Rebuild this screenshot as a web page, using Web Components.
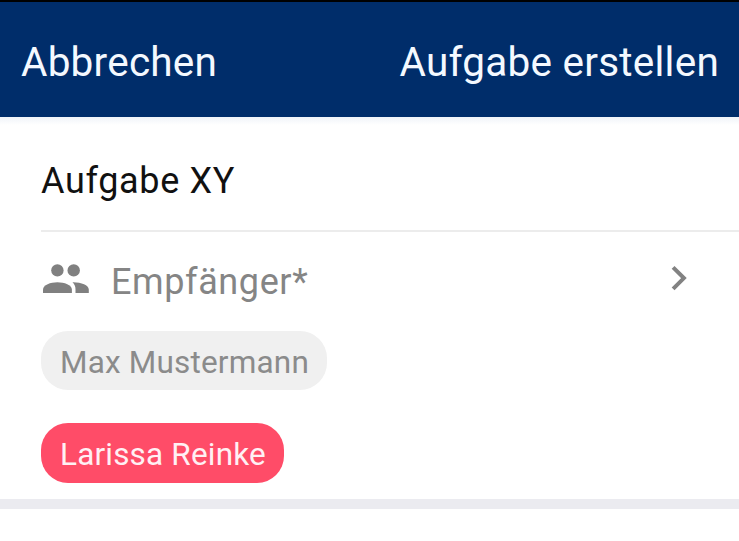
<!DOCTYPE html>
<html lang="de">
<head>
<meta charset="utf-8">
<title>Aufgabe erstellen</title>
<style>
  body {
    margin: 0;
    background: #fff;
    font-family: Roboto, sans-serif;
  }
</style>
</head>
<body>
<task-form>
  <task-toolbar slot="toolbar">
    <span slot="start">Abbrechen</span>
    <span slot="end">Aufgabe erstellen</span>
  </task-toolbar>
  <task-title>Aufgabe XY</task-title>
  <task-recipients label="Empfänger*">
    <user-chip>Max Mustermann</user-chip>
    <user-chip active>Larissa Reinke</user-chip>
  </task-recipients>
</task-form>

<script>
class BaseElement extends HTMLElement {
  constructor() {
    super();
    const template = document.createElement('template');
    template.innerHTML = this.constructor.markup;
    this.attachShadow({ mode: 'open' });
    this.shadowRoot.appendChild(template.content.cloneNode(true));
  }
}

class TaskForm extends BaseElement {
  static markup = `
    <style>
      :host {
        display: flex;
        flex-direction: column;
        height: 541px;
        overflow: hidden;
      }

      .content {
        flex: none;
        box-sizing: border-box;
        height: 392px;
        padding-left: 41px;
        border-bottom: 10px solid #ebebf0;
        background: linear-gradient(#f0f3f9, #fff 8px);
      }
    </style>
    <slot name="toolbar"></slot>
    <div class="content"><slot></slot></div>
  `;
}

class TaskToolbar extends BaseElement {
  static markup = `
    <style>
      :host {
        display: flex;
        align-items: center;
        justify-content: space-between;
        flex: none;
        box-sizing: border-box;
        height: 117px;
        padding: 4px 20px 0 21px;
        border-top: 2px solid #000;
        background: #002d6a;
        color: #f4f9ff;
        font-size: 40.5px;
        letter-spacing: 0.23px;
        line-height: 48px;
        white-space: nowrap;
      }
    </style>
    <slot name="start"></slot>
    <slot name="end"></slot>
  `;
}

class TaskTitle extends BaseElement {
  static markup = `
    <style>
      :host {
        display: flex;
        align-items: center;
        box-sizing: border-box;
        height: 115px;
        padding-top: 15px;
        border-bottom: 2px solid #ececec;
        color: #111;
        font-size: 36px;
        letter-spacing: 0.65px;
      }
    </style>
    <slot></slot>
  `;
}

class TaskRecipients extends BaseElement {
  static observedAttributes = ['label'];

  static markup = `
    <style>
      :host {
        display: block;
      }

      .row {
        display: flex;
        align-items: center;
        height: 99px;
        color: #858585;
      }

      .people {
        width: 50px;
        height: 50px;
        margin-bottom: 6px;
      }

      .label {
        flex: 1;
        margin-left: 20px;
        font-size: 36px;
        letter-spacing: 0.6px;
      }

      .chevron {
        width: 20px;
        height: 30px;
        margin: 0 50px 7px 0;
      }

      .chips {
        display: flex;
        flex-direction: column;
        align-items: flex-start;
        gap: 33px;
      }
    </style>
    <div class="row">
      <svg class="people" viewBox="0 0 50 50" fill="#808080">
        <circle cx="16.4" cy="16.4" r="6.2"/>
        <circle cx="32.7" cy="16.4" r="6.2"/>
        <path d="M2 39v-3.5c0-4.5 7.5-7.3 14.4-7.3s14.5 2.8 14.5 7.3v3.5z"/>
        <path d="M31.5 28.3c8.3-.2 16.3 2.7 16.3 7.2v3.5H34.5v-3.5c0-3-1-5.1-3-7.2z"/>
      </svg>
      <span class="label"></span>
      <svg class="chevron" viewBox="0 0 20 30" fill="none" stroke="#828282" stroke-width="4">
        <path d="M4.1 4.3L14.9 15.1L4.1 25.9"/>
      </svg>
    </div>
    <div class="chips"><slot></slot></div>
  `;

  attributeChangedCallback(name, oldVal, newVal) {
    this.shadowRoot.querySelector('.label').textContent = newVal || '';
  }
}

class UserChip extends BaseElement {
  static markup = `
    <style>
      :host {
        display: flex;
        align-items: center;
        box-sizing: border-box;
        height: 59px;
        padding: 4px 18px 0 19px;
        border-radius: 27px;
        background: #f0f0f0;
        color: #8b8b8b;
        font-size: 31.5px;
        letter-spacing: 0.18px;
        white-space: nowrap;
      }

      :host([active]) {
        height: 60px;
        padding-top: 2px;
        background: #ff4c68;
        color: #fff0f4;
      }
    </style>
    <slot></slot>
  `;
}

customElements.define('task-form', TaskForm);
customElements.define('task-toolbar', TaskToolbar);
customElements.define('task-title', TaskTitle);
customElements.define('task-recipients', TaskRecipients);
customElements.define('user-chip', UserChip);
</script>
</body>
</html>
